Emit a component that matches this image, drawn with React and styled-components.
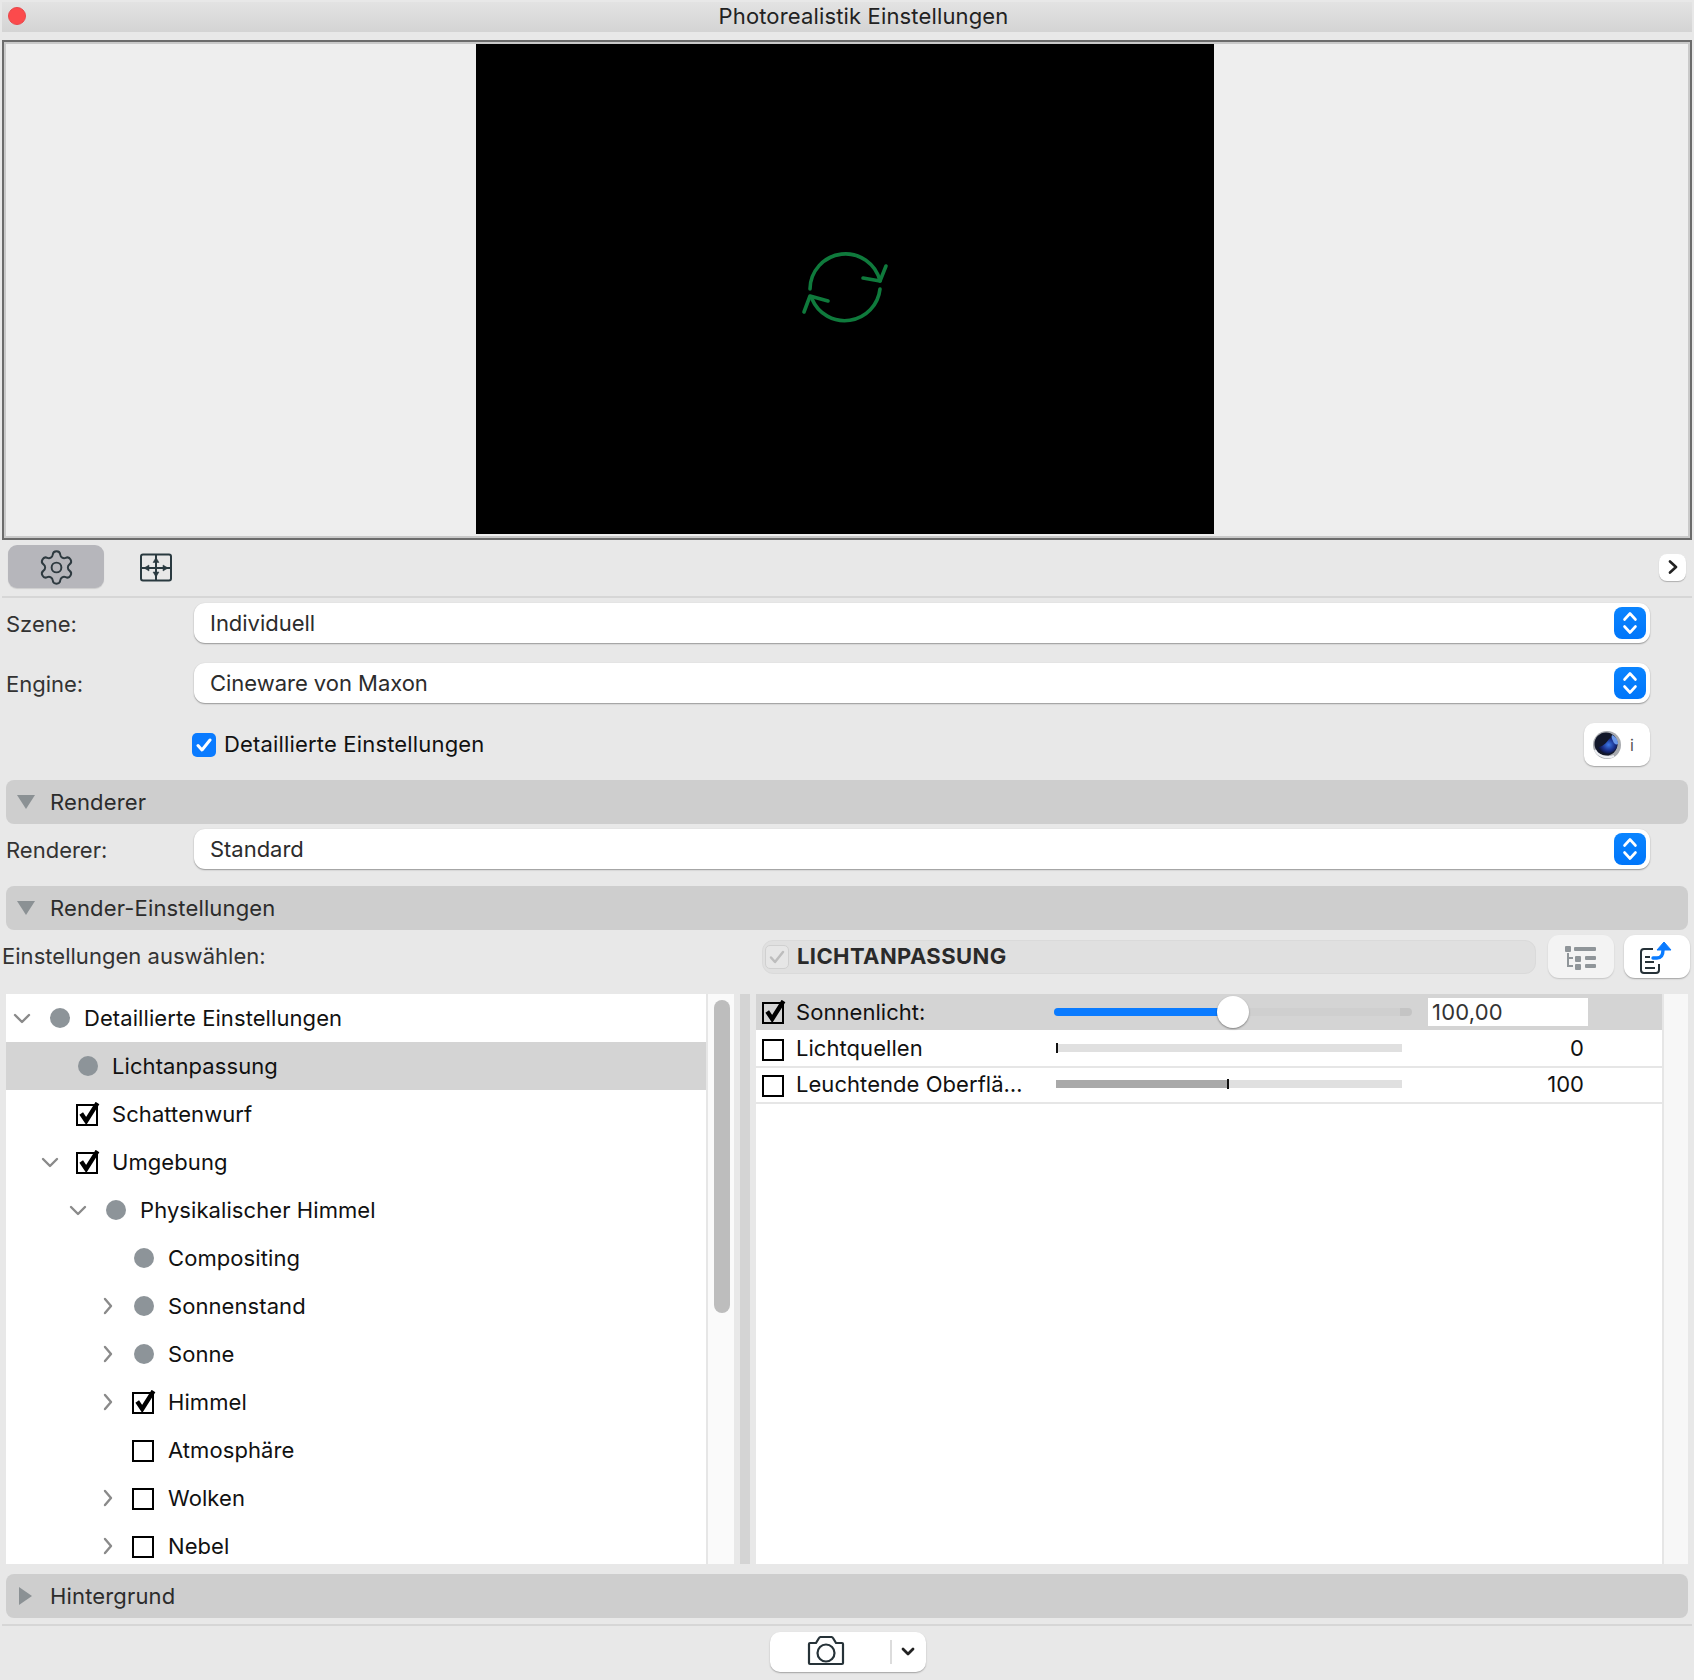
import React from "react";
import styled, { createGlobalStyle } from "styled-components";
import { Settings } from "lucide-react";

const Global = createGlobalStyle`
  html, body { margin: 0; padding: 0; background: #f0f0f0; }
  * { box-sizing: border-box; }
  body { font-family: Inter, "Noto Sans", "Liberation Sans", sans-serif; font-size: 22px; color: #2c2c2c; }
`;

const Win = styled.div`
  width: 1694px; height: 1680px; padding: 2px 2px 0; background: #e8e8e8;
  display: flex; flex-direction: column; overflow: hidden;
`;
const TitleBar = styled.div`
  height: 30px; flex: none; position: relative; display: flex; align-items: center; justify-content: center;
  padding: 0 0 2px 33px; background: linear-gradient(#e3e3e3, #d4d4d4); color: #222; letter-spacing: 0.15px;
`;
const Close = styled.span`
  position: absolute; left: 6px; top: 5px; width: 18px; height: 18px; border-radius: 50%;
  background: #fc4a4c; border: 1px solid #e8474a;
`;
const Preview = styled.div`
  margin-top: 8px; height: 500px; flex: none; background: #eeeeee; border: 2px solid #6b6b6b;
  box-shadow: inset 0 0 0 2px #c9c9c9; padding-top: 2px; display: flex; justify-content: center; align-items: flex-start;
`;
const Render = styled.div`
  width: 738px; height: 490px; margin-left: -5px; background: #000; display: flex; align-items: center; justify-content: center;
`;
const Toolbar = styled.div`
  height: 56px; flex: none; display: flex; align-items: center; padding: 0 6px;
`;
const ToolActive = styled.div`
  width: 96px; height: 43px; margin-top: -3px; border-radius: 9px; background: #b6b6bb; display: flex; align-items: center; justify-content: center;
  box-shadow: 0 1px 1px rgba(0,0,0,.12); color: #2e3a40; padding-top: 2px;
`;
const ToolIcon = styled.div`
  margin-left: 35px; width: 34px; height: 30px; display: flex;
`;
const RoundBtn = styled.div`
  margin-left: auto; width: 27px; height: 27px; margin-top: -2px; border-radius: 8px; background: #fff;
  box-shadow: 0 1px 1px rgba(0,0,0,.25); display: flex; align-items: center; justify-content: center;
`;
const Rule = styled.div`
  height: 2px; flex: none; background: #d6d6d6; margin-top: ${p => p.$top || 0}px;
`;
const FormRow = styled.div`
  display: flex; align-items: center; flex: none; height: 40px; margin-top: ${p => p.$top}px; padding-left: 4px; color: #333;
`;
const Label = styled.div`
  width: 188px; flex: none; padding-top: 2px;
`;
const Select = styled.div`
  width: 1456px; height: 40px; background: #fff; border-radius: 11px; display: flex; align-items: center; justify-content: space-between;
  padding: 0 4px 0 16px; box-shadow: 0 1px 1.5px rgba(0,0,0,.35), 0 0 1px rgba(0,0,0,.1); color: #2c2c2c; letter-spacing: -0.03px;
`;
const Stepper = styled.div`
  width: 32px; height: 32px; border-radius: 8px; background: linear-gradient(#0a84ff, #0076fa); display: flex; align-items: center; justify-content: center;
`;
const CheckRow = styled.div`
  display: flex; align-items: center; flex: none; height: 43px; margin-top: 20px; padding-left: 188px; margin-left: 2px; color: #111;
`;
const BlueCheck = styled.div`
  width: 24px; height: 24px; border-radius: 5px; background: #0a7bff; display: flex; align-items: center; justify-content: center; margin-right: 8px;
`;
const CheckText = styled.span` letter-spacing: 0.17px; margin-top: -2px; `;
const InfoBtn = styled.div`
  margin-left: auto; margin-right: 42px; width: 66px; height: 43px; border-radius: 10px; background: #fff; box-shadow: 0 1px 1.5px rgba(0,0,0,.3);
  display: flex; align-items: center; gap: 8px; padding-left: 8px; color: #555; font-size: 16px;
`;
const Section = styled.div`
  flex: none; height: 44px; margin: ${p => p.$top}px 4px 0; border-radius: 8px; background: #cecece; display: flex; align-items: center; padding-left: 10px; color: #2c2c2c;
`;
const SectionLabel = styled.span` margin-left: 14px; letter-spacing: 0.15px; `;
const HeadRow = styled.div`
  flex: none; height: 43px; margin-top: 5px; display: flex; align-items: center; color: #333;
`;
const HeadLabel = styled.div` width: 760px; letter-spacing: 0.03px; margin-top: -2px; `;
const TitlePill = styled.div`
  width: 774px; height: 34px; border-radius: 11px; background: #e0e0e0; border: 1px solid #dadada; display: flex; align-items: center; padding-left: 2px;
`;
const DisabledCheck = styled.div`
  width: 24px; height: 24px; border-radius: 5px; background: #e6e6e6; border: 1px solid #d0d0d0; display: flex; align-items: center; justify-content: center; margin-right: 8px;
`;
const TitleText = styled.span` font-weight: 700; color: #2a2a2a; letter-spacing: 0.4px; margin-top: -2px; `;
const IconBtn = styled.div`
  width: 66px; height: 43px; border-radius: 11px; margin-left: ${p => p.$left}px; background: ${p => p.$bg};
  box-shadow: 0 1px 1.5px rgba(0,0,0,${p => p.$shade}); display: flex; align-items: center; justify-content: center;
`;
const Panels = styled.div`
  flex: none; height: 570px; margin-top: 16px; margin-left: 4px; display: flex;
`;
const Tree = styled.div`
  width: 702px; background: #fff; border-right: 2px solid #e6e6e6; overflow: hidden;
`;
const TreeRow = styled.div`
  height: 48px; display: flex; align-items: center; color: #111; letter-spacing: 0.08px; padding-left: ${p => p.$level * 28}px;
  background: ${p => (p.$selected ? "#d4d4d4" : "transparent")};
`;
const ChevronSlot = styled.div`
  width: 32px; flex: none; display: flex; justify-content: center;
`;
const MarkSlot = styled.div`
  width: 44px; flex: none; display: flex; justify-content: center; margin-right: 2px;
`;
const Dot = styled.span`
  width: 20px; height: 20px; border-radius: 50%; background: #8d9499;
`;
const Track = styled.div`
  width: 26px; flex: none; background: #fafafa; padding: 6px 6px 0;
`;
const Thumb = styled.div`
  width: 16px; height: 313px; border-radius: 8px; background: #bdbdbd;
`;
const Stripe = styled.div`
  width: 10px; flex: none; margin: 0 6px; background: #d4d4d4;
`;
const Props = styled.div`
  width: 908px; flex: none; background: #fff; border-right: 2px solid #e6e6e6;
`;
const Gutter = styled.div`
  width: 24px; flex: none; background: #f7f7f7;
`;
const PropRow = styled.div`
  height: ${p => (p.$active ? 38 : 36)}px; display: flex; align-items: center; padding-left: 6px; color: #111; letter-spacing: 0.05px;
  background: ${p => (p.$active ? "#d4d4d4" : "#fff")};
  border-bottom: 2px solid ${p => (p.$active ? "#fff" : "#e6e6e6")};
`;
const PropName = styled.div`
  margin: ${p => (p.$active ? 0 : -2)}px 0 0 10px; width: 258px; flex: none; white-space: nowrap;
`;
const SliderTrack = styled.div`
  position: relative; width: 358px; height: 8px; border-radius: 4px; background: #c4c4c4; flex: none;
`;
const SliderRest = styled.div`
  position: absolute; left: 170px; top: 0; width: 176px; height: 8px; background: #cfcfcf;
`;
const SliderFill = styled.div`
  position: absolute; left: 0; top: 0; height: 8px; border-radius: 4px 0 0 4px; background: #0a7bff;
`;
const SliderThumb = styled.div`
  position: absolute; top: -12px; width: 32px; height: 32px; border-radius: 50%; background: #fff; box-shadow: 0 1px 2px rgba(0,0,0,.4);
`;
const ValueInput = styled.div`
  width: 160px; height: 28px; margin-left: 16px; background: #fff; color: #333; padding-left: 4px; line-height: 28px; letter-spacing: 0.2px;
`;
const LineTrack = styled.div`
  position: relative; width: 346px; height: 8px; margin: -2px 0 0 2px; background: #e0e0e0; flex: none;
`;
const LineFill = styled.div`
  position: absolute; left: 0; top: 0; height: 8px; background: #a9a9a9;
`;
const Tick = styled.div`
  position: absolute; top: -1px; width: 2px; height: 10px; background: #111;
`;
const Value = styled.div`
  width: 182px; text-align: right; flex: none; margin-top: -2px;
`;
const Footer = styled.div`
  flex: 1; display: flex; justify-content: center; padding-top: 6px; padding-left: 2px;
`;
const ShotBtn = styled.div`
  width: 156px; height: 40px; border-radius: 10px; background: #fff; box-shadow: 0 1px 1.5px rgba(0,0,0,.3); display: flex; align-items: center; color: #263238;
`;
const ShotIcon = styled.div`
  width: 120px; display: flex; justify-content: center; padding-right: 8px; margin-top: -3px;
`;
const ShotDivider = styled.div`
  width: 2px; height: 24px; background: #dcdcdc; margin-right: 9px;
`;

const Step = () => (
  <Stepper>
    <svg width="16" height="26" viewBox="0 0 16 26" fill="none" stroke="#fff" strokeWidth="2.6" strokeLinecap="round" strokeLinejoin="round">
      <path d="M2.5 9.5 8 3.5l5.5 6M2.5 16.5 8 22.5l5.5-6" />
    </svg>
  </Stepper>
);
const Tri = ({ open }) => (
  <svg width="20" height="20" viewBox="0 0 20 20" fill="#8b9194">
    {open ? <path d="M1 3h18l-9 14z" /> : <path d="M3 1v18l13-9z" />}
  </svg>
);
const Chevron = ({ dir }) => (
  <svg width="18" height="18" viewBox="0 0 18 18" fill="none" stroke="#8a8a8a" strokeWidth="2.4" strokeLinecap="round" strokeLinejoin="round">
    {dir === "down" ? <path d="M2 6l7 7 7-7" /> : <path d="M8 2l6 7-6 7" />}
  </svg>
);
const Mark = ({ checked }) => (
  <svg width="24" height="25" viewBox="0 0 24 25" fill="none">
    <rect x="1" y="3" width="20" height="20" stroke="#000" strokeWidth="2" />
    {checked && <path d="M5.2 11.500 10.200 19 21.500 1" stroke="#000" strokeWidth="4.400" />}
  </svg>
);
const Sync = () => (
  <svg width="160" height="130" viewBox="5 3 160 130" fill="none" stroke="#0f7a3c" strokeWidth="3.6" strokeLinecap="round" strokeLinejoin="round">
    <path d="M50 68a35.500 35.500 0 0 1 70-8" />
    <path d="M120 68a35.500 35.500 0 0 1-68 10" />
    <path d="M103 57l17 3 6-15M68 80l-18-5-6 16" />
  </svg>
);
const MoveGrid = () => (
  <svg width="34" height="30" viewBox="0 0 34 30" fill="none" stroke="#2a3a40" strokeWidth="2" strokeLinejoin="round">
    <rect x="2" y="1.500" width="30" height="26" rx="2" />
    <path d="M17 2v26M2 15h30" />
    <path d="M17 4.500l3 5h-6zM17 24l3-5h-6zM5 15l5-3v6zM29 15l-5-3v6z" fill="#2a3a40" strokeWidth="0.500" />
  </svg>
);
const Logo = () => (
  <svg width="30" height="30" viewBox="0 0 30 30">
    <defs>
      <radialGradient id="lg" cx="55%" cy="50%" r="55%">
        <stop offset="0" stopColor="#3d78e6" />
        <stop offset="0.6" stopColor="#1a2f8a" />
        <stop offset="1" stopColor="#0a1030" />
      </radialGradient>
    </defs>
    <circle cx="15" cy="15" r="14" fill="#a7a9ae" />
    <circle cx="14" cy="14" r="11.500" fill="#12172a" />
    <path d="M6 17c6 0 9-6 14-11 4 2 6 7 5 11-2 5-8 8-13 6-3-1-5-3-6-6z" fill="url(#lg)" />
    <path d="M20 5c3 1 6 4 6 9-2 1-4 0-5-3-1-2-2-4-1-6z" fill="#6b98ea" />
    <path d="M3 20c3 6 12 9 19 6" stroke="#eceef2" strokeWidth="2.200" fill="none" />
  </svg>
);
const ListIcon = () => (
  <svg width="34" height="26" viewBox="0 0 34 26" fill="#8f9599">
    <rect x="1" y="2" width="6" height="6" rx="1" />
    <rect x="10" y="3" width="22" height="4" rx="1" />
    <rect x="11" y="12" width="6" height="6" rx="1" />
    <rect x="21" y="12" width="11" height="4" rx="1" />
    <rect x="11" y="20" width="6" height="6" rx="1" />
    <rect x="21" y="20" width="11" height="4" rx="1" />
    <path d="M4 9v5h5M4 14v8h5" fill="none" stroke="#8f9599" strokeWidth="2" />
  </svg>
);
const ExportIcon = () => (
  <svg width="34" height="43" viewBox="0 0 34 43" fill="none">
    <path d="M13 14H4a3 3 0 0 0-3 3v18a3 3 0 0 0 3 3h12a3 3 0 0 0 3-3v-6" stroke="#263238" strokeWidth="2" strokeLinejoin="round" />
    <path d="M5 22h5M5 27h9M5 33h10" stroke="#263238" strokeWidth="2" />
    <path d="M13 23h4c4 0 6-3 6-8" stroke="#0a7bff" strokeWidth="3.400" strokeLinecap="round" />
    <path d="M24 7l7 8H17z" fill="#0a7bff" stroke="#0a7bff" strokeWidth="1" strokeLinejoin="round" />
  </svg>
);
const CameraIcon = () => (
  <svg width="38" height="31" viewBox="0 0 38 31" fill="none" stroke="#263238" strokeWidth="2.200" strokeLinejoin="round">
    <path d="M2 9a1 1 0 0 1 1-1h6l3-5a2 2 0 0 1 1.500-1h11a2 2 0 0 1 1.500 1l3 5h6a1 1 0 0 1 1 1v19a1 1 0 0 1-1 1H3a1 1 0 0 1-1-1z" />
    <circle cx="19" cy="18" r="8.500" />
  </svg>
);

const treeData = [
  { t: "Detaillierte Einstellungen", l: 0, c: "down", m: "dot" },
  { t: "Lichtanpassung", l: 1, m: "dot", s: true },
  { t: "Schattenwurf", l: 1, m: "on" },
  { t: "Umgebung", l: 1, c: "down", m: "on" },
  { t: "Physikalischer Himmel", l: 2, c: "down", m: "dot" },
  { t: "Compositing", l: 3, m: "dot" },
  { t: "Sonnenstand", l: 3, c: "right", m: "dot" },
  { t: "Sonne", l: 3, c: "right", m: "dot" },
  { t: "Himmel", l: 3, c: "right", m: "on" },
  { t: "Atmosphäre", l: 3, m: "off" },
  { t: "Wolken", l: 3, c: "right", m: "off" },
  { t: "Nebel", l: 3, c: "right", m: "off" },
];

export default function App() {
  return (
    <Win>
      <Global />
      <TitleBar>
        <Close />
        Photorealistik Einstellungen
      </TitleBar>
      <Preview>
        <Render><Sync /></Render>
      </Preview>
      <Toolbar>
        <ToolActive><Settings size={39} strokeWidth={1.2} /></ToolActive>
        <ToolIcon><MoveGrid /></ToolIcon>
        <RoundBtn>
          <svg width="12" height="14" viewBox="0 0 12 14" fill="none" stroke="#222" strokeWidth="2.600" strokeLinecap="round" strokeLinejoin="round"><path d="M3 1.500 9 7l-6 5.500" /></svg>
        </RoundBtn>
      </Toolbar>
      <Rule />
      <FormRow $top={5}><Label>Szene:</Label><Select>Individuell<Step /></Select></FormRow>
      <FormRow $top={20}><Label>Engine:</Label><Select>Cineware von Maxon<Step /></Select></FormRow>
      <CheckRow>
        <BlueCheck>
          <svg width="16" height="14" viewBox="0 0 16 14" fill="none" stroke="#fff" strokeWidth="3" strokeLinecap="round" strokeLinejoin="round"><path d="M2 7.500 6 12l8-10" /></svg>
        </BlueCheck>
        <CheckText>Detaillierte Einstellungen</CheckText>
        <InfoBtn><Logo />i</InfoBtn>
      </CheckRow>
      <Section $top={14}><Tri open /><SectionLabel>Renderer</SectionLabel></Section>
      <FormRow $top={5}><Label>Renderer:</Label><Select>Standard<Step /></Select></FormRow>
      <Section $top={17}><Tri open /><SectionLabel>Render-Einstellungen</SectionLabel></Section>
      <HeadRow>
        <HeadLabel>Einstellungen auswählen:</HeadLabel>
        <TitlePill>
          <DisabledCheck>
            <svg width="16" height="14" viewBox="0 0 16 14" fill="none" stroke="#bdbdbd" strokeWidth="2.500" strokeLinecap="round" strokeLinejoin="round"><path d="M2 7.500 6 12l8-10" /></svg>
          </DisabledCheck>
          <TitleText>LICHTANPASSUNG</TitleText>
        </TitlePill>
        <IconBtn $left={12} $bg="#f3f3f3" $shade=".15"><ListIcon /></IconBtn>
        <IconBtn $left={10} $bg="#fff" $shade=".3"><ExportIcon /></IconBtn>
      </HeadRow>
      <Panels>
        <Tree>
          {treeData.map(r => (
            <TreeRow key={r.t} $level={r.l} $selected={r.s}>
              <ChevronSlot>{r.c && <Chevron dir={r.c} />}</ChevronSlot>
              <MarkSlot>{r.m === "dot" ? <Dot /> : <Mark checked={r.m === "on"} />}</MarkSlot>
              {r.t}
            </TreeRow>
          ))}
        </Tree>
        <Track><Thumb /></Track>
        <Stripe />
        <Props>
          <PropRow $active>
            <Mark checked />
            <PropName $active>Sonnenlicht:</PropName>
            <SliderTrack>
              <SliderRest />
              <SliderFill style={{ width: 170 }} />
              <SliderThumb style={{ left: 163 }} />
            </SliderTrack>
            <ValueInput>100,00</ValueInput>
          </PropRow>
          <PropRow>
            <Mark />
            <PropName>Lichtquellen</PropName>
            <LineTrack><Tick style={{ left: 0 }} /></LineTrack>
            <Value>0</Value>
          </PropRow>
          <PropRow>
            <Mark />
            <PropName>Leuchtende Oberflä…</PropName>
            <LineTrack>
              <LineFill style={{ width: 171 }} />
              <Tick style={{ left: 171 }} />
            </LineTrack>
            <Value>100</Value>
          </PropRow>
        </Props>
        <Gutter />
      </Panels>
      <Section $top={10}><Tri /><SectionLabel>Hintergrund</SectionLabel></Section>
      <Rule $top={6} />
      <Footer>
        <ShotBtn>
          <ShotIcon><CameraIcon /></ShotIcon>
          <ShotDivider />
          <svg width="14" height="10" viewBox="0 0 14 10" fill="none" stroke="#222" strokeWidth="2.800" strokeLinecap="round" strokeLinejoin="round"><path d="M2 2l5 5 5-5" /></svg>
        </ShotBtn>
      </Footer>
    </Win>
  );
}
